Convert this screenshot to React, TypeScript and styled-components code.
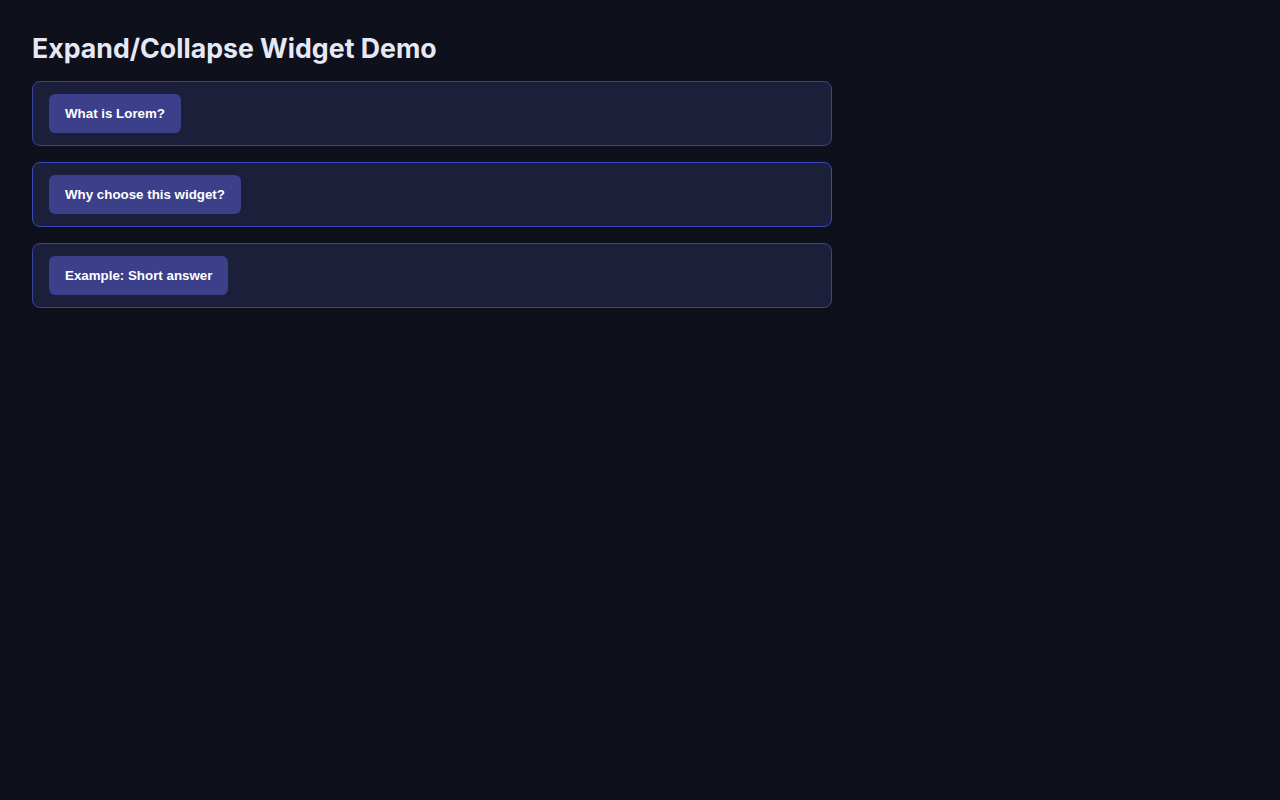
import React, { useState } from 'react'
import styled, { createGlobalStyle } from 'styled-components'

const GlobalStyle = createGlobalStyle`
  html, body {
    margin: 0;
    padding: 0;
    background: #0e101b;
  }
  body {
    font-family: Inter, "Noto Sans", sans-serif;
    color: #e6e8f5;
  }
`

const Page = styled.main`
  padding: 32px;
  min-height: 100vh;
  box-sizing: border-box;
`

const Title = styled.h1`
  margin: 0 0 16px;
  font-size: 26.7px;
  line-height: 33px;
  font-weight: 700;
  color: #e6e8f5;
`

const List = styled.div`
  display: flex;
  flex-direction: column;
  gap: 16px;
  width: 800px;
`

const Panel = styled.section<{ $active?: boolean }>`
  background: #1c1f3a;
  border: 1px solid ${({ $active }) => ($active ? '#3a4abb' : '#38449a')};
  border-radius: 8px;
  padding: 12px 16px;
`

const Toggle = styled.button`
  display: inline-block;
  background: #3c3f8a;
  color: #ffffff;
  border: none;
  border-radius: 6px;
  padding: 12px 16px;
  font-family: "Liberation Sans", Arial, sans-serif;
  font-size: 13.33px;
  line-height: 15px;
  font-weight: 700;
  cursor: pointer;
`

const Body = styled.div`
  margin-top: 12px;
  font-size: 14px;
  line-height: 1.5;
  color: #c9cce6;
`

const items = [
  { q: 'What is Lorem?', a: 'Lorem ipsum dolor sit amet, consectetur adipiscing elit.' },
  { q: 'Why choose this widget?', a: 'It is small, accessible and easy to style.' },
  { q: 'Example: Short answer', a: 'Yes.' },
]

const App = () => {
  const [open, setOpen] = useState<number | null>(null)

  return (
    <>
      <GlobalStyle />
      <Page>
        <Title>Expand/Collapse Widget Demo</Title>
        <List>
          {items.map((item, i) => (
            <Panel key={item.q} $active={i === 1}>
              <Toggle aria-expanded={open === i} onClick={() => setOpen(open === i ? null : i)}>
                {item.q}
              </Toggle>
              {open === i && <Body>{item.a}</Body>}
            </Panel>
          ))}
        </List>
      </Page>
    </>
  )
}

export default App
